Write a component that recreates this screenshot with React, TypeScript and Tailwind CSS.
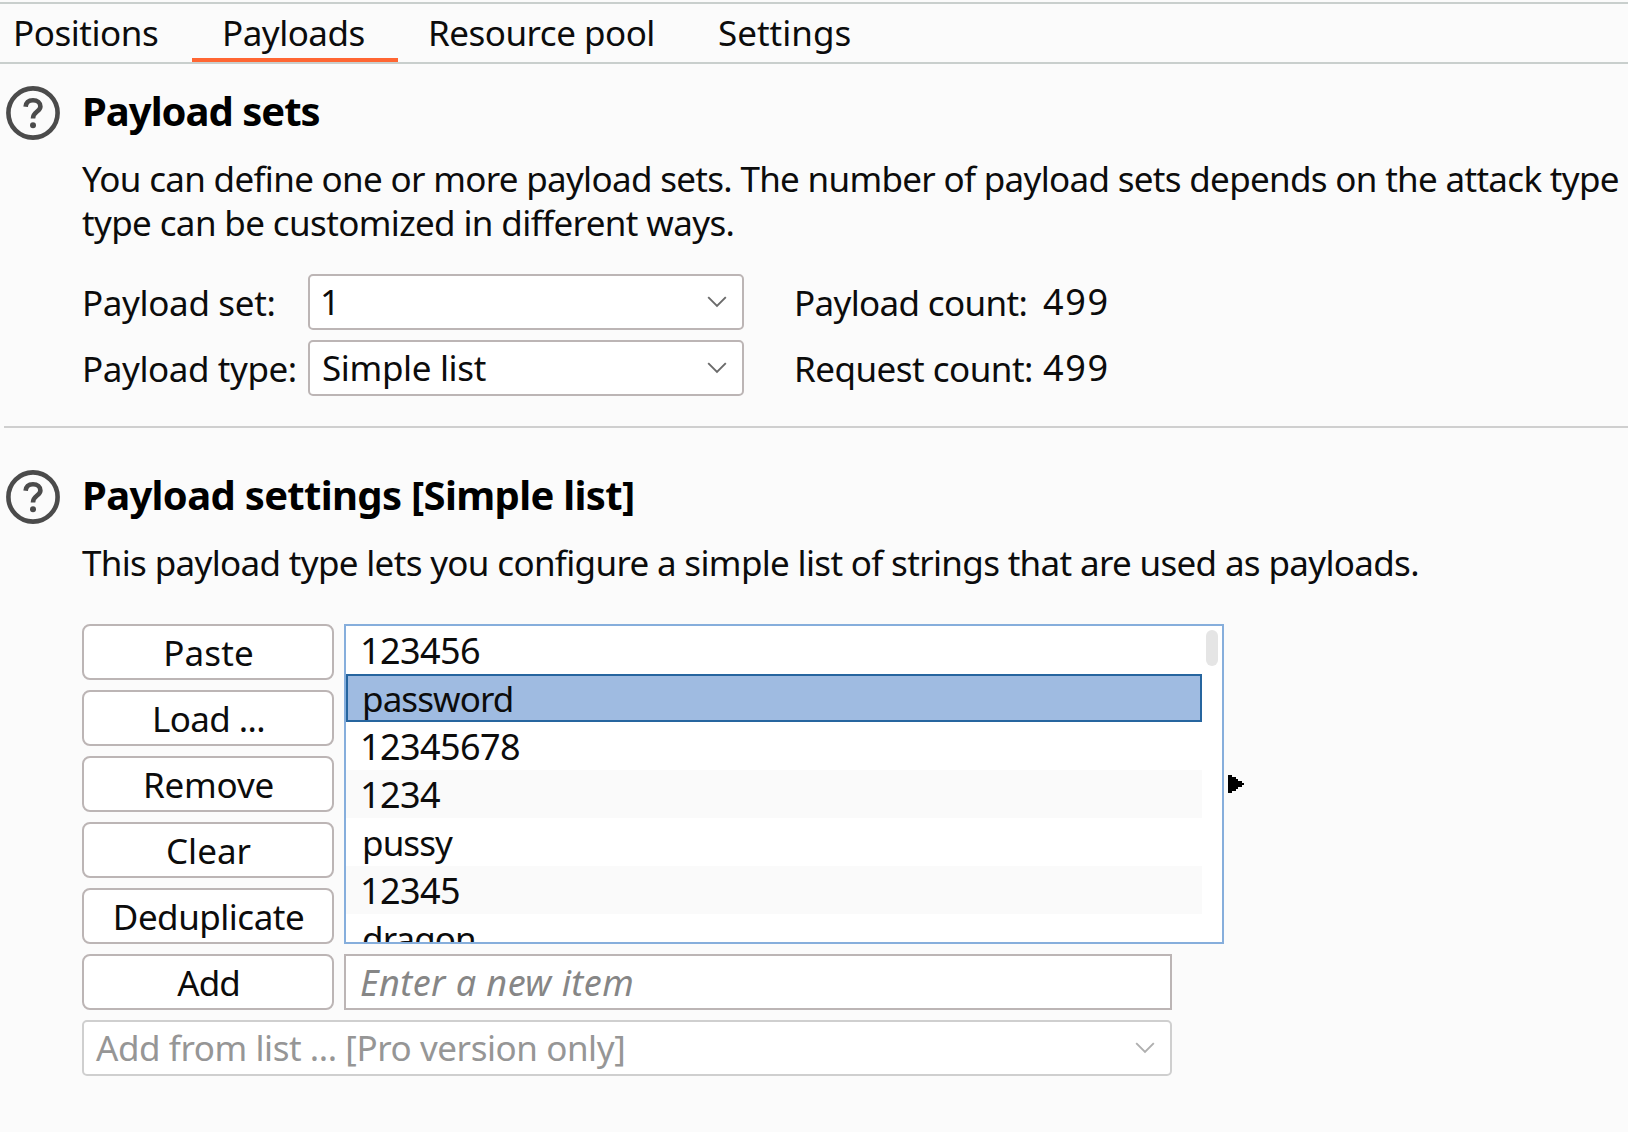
import React from "react";

function HelpIcon() {
  return (
    <svg width="54" height="54" viewBox="0 0 54 54" fill="none" className="shrink-0">
      <circle cx="27" cy="27" r="24.6" stroke="#4b4b4b" strokeWidth="4.6" />
      <path
        d="M19.6 20.8 C20 16.2 22.8 14.2 27 14.2 C31.4 14.2 34.4 16.8 34.4 20.4 C34.4 25.8 27 25.4 27 32.4"
        stroke="#4b4b4b"
        strokeWidth="4.6"
      />
      <circle cx="27" cy="39.2" r="3" fill="#4b4b4b" />
    </svg>
  );
}

function Chevron({ className }: { className: string }) {
  return (
    <svg width="20" height="12" viewBox="0 0 20 12" fill="none" className={className}>
      <path d="M1.2 1.2 L10 10 L18.8 1.2" stroke="currentColor" strokeWidth="1.9" />
    </svg>
  );
}

function Select({ value, className }: { value: string; className: string }) {
  return (
    <div className={`flex h-14 items-center justify-between rounded-[5px] border-2 bg-white ${className}`}>
      <span className="leading-[54px]">{value}</span>
      <Chevron className="" />
    </div>
  );
}

const tabs = [
  { label: "Positions", box: "w-[192px] pl-[13px] tracking-[-0.45px]", active: false },
  { label: "Payloads", box: "w-[206px] pl-[30px] tracking-[-0.5px]", active: true },
  { label: "Resource pool", box: "w-[291px] pl-[30px] tracking-[-0.5px]", active: false },
  { label: "Settings", box: "w-[200px] pl-[29px] tracking-normal", active: false },
];

const actions = [
  { label: "Paste", spacing: "tracking-[0.15px]" },
  { label: "Load ...", spacing: "tracking-[-0.6px]" },
  { label: "Remove", spacing: "tracking-[-0.2px]" },
  { label: "Clear", spacing: "tracking-normal" },
  { label: "Deduplicate", spacing: "tracking-[-0.5px]" },
  { label: "Add", spacing: "tracking-[-1px]" },
];

const digits = "text-[36px] tracking-[-0.6px] pl-[12px]";
const word = "tracking-[-0.9px] pl-[14px]";

const items = [
  { text: "123456", style: digits },
  { text: "password", style: word },
  { text: "12345678", style: digits },
  { text: "1234", style: digits },
  { text: "pussy", style: word },
  { text: "12345", style: digits },
  { text: "dragon", style: word },
];

export default function App() {
  return (
    <div className="h-[1132px] w-[1628px] overflow-hidden bg-[#fbfbfb] font-['Noto_Sans',sans-serif] text-[35px] whitespace-nowrap text-[#0c0c0c]">
      <nav className="mt-0.5 flex h-[62px] border-y-2 border-[#c9cfcd]">
        {tabs.map((t) => (
          <div
            key={t.label}
            className={`h-[58px] border-b-4 leading-[58px] ${t.box} ${t.active ? "border-[#ff6633]" : "border-transparent"}`}
          >
            {t.label}
          </div>
        ))}
      </nav>

      <section className="flex h-[362px] gap-[22px] pt-[22px] pl-[6px]">
        <HelpIcon />
        <div>
          <h2 className="h-[54px] text-[40px] leading-[49px] font-bold tracking-[-1px] text-black">Payload sets</h2>
          <div className="mt-[17px] leading-[44px]">
            <p className="tracking-[-0.69px]">
              You can define one or more payload sets. The number of payload sets depends on the attack type
            </p>
            <p className="tracking-[-0.63px]">type can be customized in different ways.</p>
          </div>
          <div className="mt-[29px] grid grid-cols-[226px_436px_50px_249px_100px] gap-y-2.5 leading-[58px]">
            <span className="h-14 tracking-[-0.35px]">Payload set:</span>
            <Select value="1" className="border-[#bcb5b5] pr-[15px] pl-[10px] [&>svg]:text-[#6a6a6a]" />
            <span />
            <span className="h-14 tracking-[-0.66px]">Payload count:</span>
            <span className="h-14 text-[36px] leading-[56px] tracking-[1.7px]">499</span>
            <span className="h-14 tracking-[-0.42px]">Payload type:</span>
            <Select
              value="Simple list"
              className="border-[#bcb5b5] pr-[15px] pl-[12px] tracking-[-0.35px] [&>svg]:text-[#6a6a6a]"
            />
            <span />
            <span className="h-14 tracking-[-0.52px]">Request count:</span>
            <span className="h-14 text-[36px] leading-[56px] tracking-[1.7px]">499</span>
          </div>
        </div>
      </section>

      <div className="ml-1 h-0.5 bg-[#cfcfcf]" />

      <section className="flex gap-[22px] pt-[42px] pl-[6px]">
        <HelpIcon />
        <div>
          <h2 className="h-[54px] text-[40px] leading-[49px] font-bold tracking-[-0.68px] text-black">
            Payload settings [Simple list]
          </h2>
          <p className="mt-[17px] leading-[44px] tracking-[-0.67px]">
            This payload type lets you configure a simple list of strings that are used as payloads.
          </p>
          <div className="mt-[39px] flex gap-2.5">
            <div className="flex w-[252px] flex-col gap-2.5">
              {actions.map((a) => (
                <button
                  key={a.label}
                  className={`h-14 rounded-[8px] border-2 border-[#bcb5b5] bg-white pl-px text-center leading-[54px] ${a.spacing}`}
                >
                  {a.label}
                </button>
              ))}
            </div>
            <div className="flex flex-col gap-2.5">
              <div className="flex items-center gap-1">
                <div className="flex h-[320px] w-[880px] overflow-hidden border-2 border-[#86aedc] bg-white">
                  <ul className="w-[856px]">
                    {items.map((it, i) => (
                      <li
                        key={it.text}
                        className={`h-12 border-2 leading-[45px] ${it.style} ${
                          i === 1
                            ? "border-[#26659f] bg-[#9fbbe1]"
                            : i % 2
                              ? "border-[#fafafa] bg-[#fafafa]"
                              : "border-white bg-white"
                        }`}
                      >
                        {it.text}
                      </li>
                    ))}
                  </ul>
                  <div className="mt-1 ml-1 h-9 w-3 rounded-full bg-[#e5e5e5]" />
                </div>
                <svg width="16" height="18" viewBox="0 0 16 18" shapeRendering="crispEdges">
                  <path d="M0 0H4V2H8V4H10V6H14V8H16V10H14V12H10V14H8V16H4V18H0Z" fill="#000" />
                </svg>
              </div>
              <div className="h-14 w-[828px] border-2 border-[#bcb5b5] bg-white pl-[14px] text-[36px] leading-[53px] tracking-[0.45px] text-[#868686] italic">
                Enter a new item
              </div>
            </div>
          </div>
          <Select
            value="Add from list ... [Pro version only]"
            className="mt-2.5 w-[1090px] border-[#cfcfcf] pr-[15px] pl-[12px] tracking-[-0.43px] text-[#969696] [&>svg]:text-[#afafaf]"
          />
        </div>
      </section>
    </div>
  );
}
